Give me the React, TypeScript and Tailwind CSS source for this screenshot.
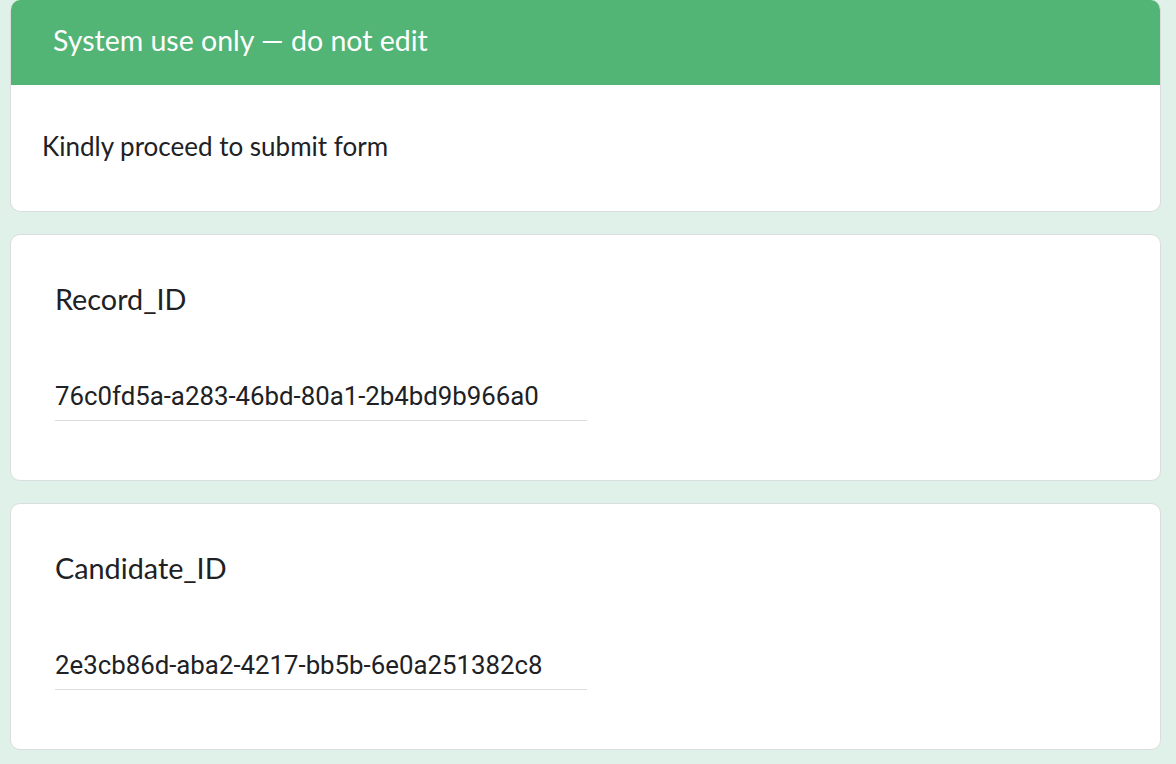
const sans = "font-['Lato','Open_Sans',sans-serif]";

function IdCard({ label, value }: { label: string; value: string }) {
  return (
    <div className="rounded-[10px] border border-[#dadce0] bg-white pl-[44px] pt-[49px] pb-[59px]">
      <div className={`${sans} text-[28.8px] leading-[30px] text-[#202124]`}>{label}</div>
      <div className="mt-[67px] w-[532px] border-b border-[#dadce0] pb-[9px] font-['Roboto',sans-serif] text-[25.8px] leading-[30px] text-[#202124]">
        {value}
      </div>
    </div>
  );
}

export default function App() {
  return (
    <div className="min-h-[764px] bg-[#dff1e8] pl-[10px] pr-[15px] pb-4">
      <div className="flex flex-col gap-[22px]">
        <div className="overflow-hidden rounded-[10px] border border-t-0 border-[#dadce0] bg-white">
          <div className={`${sans} flex h-[85px] items-center bg-[#52b475] px-[42px] pb-[4px] text-[28.5px] text-white`}>
            System use only — do not edit
          </div>
          <div className={`${sans} px-[31px] pt-[46px] pb-[50px] text-[26px] leading-[30px] text-[#202124]`}>
            Kindly proceed to submit form
          </div>
        </div>
        <IdCard label="Record_ID" value="76c0fd5a-a283-46bd-80a1-2b4bd9b966a0" />
        <IdCard label="Candidate_ID" value="2e3cb86d-aba2-4217-bb5b-6e0a251382c8" />
      </div>
    </div>
  );
}
